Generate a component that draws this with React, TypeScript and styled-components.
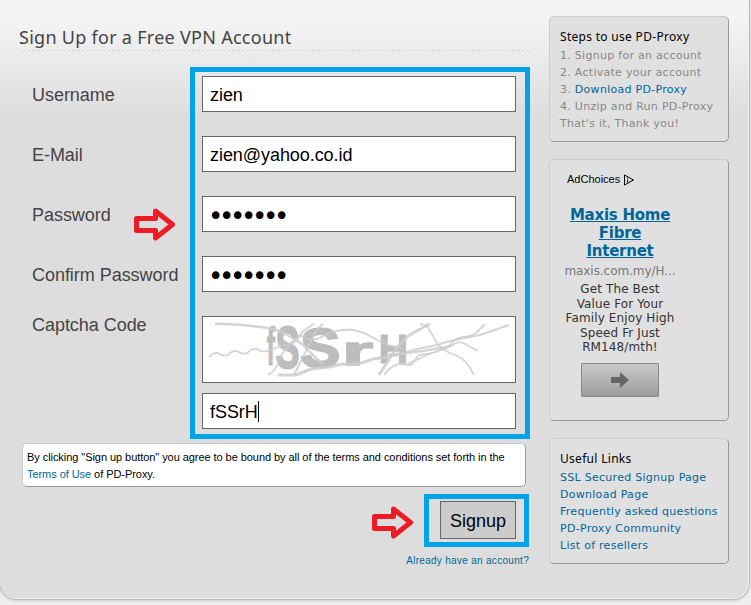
import styled, { createGlobalStyle } from 'styled-components';

const GlobalStyle = createGlobalStyle`
  * {
    box-sizing: border-box;
  }
  html, body, #root {
    height: 100%;
  }
  body {
    margin: 0;
    overflow: hidden;
    background-color: #efefef;
    font-family: 'Liberation Sans', Arial, sans-serif;
    color: #444;
  }
  h1, h2, p, ul, ol {
    margin: 0;
    padding: 0;
    font-weight: 400;
  }
  ul, ol {
    list-style: none;
  }
  a {
    color: #069;
    text-decoration: none;
  }
`;

const Panel = styled.div`
  display: flex;
  align-items: flex-start;
  width: 751px;
  height: 600px;
  margin-left: -1px;
  border: 1px solid #bbb;
  border-top: none;
  border-radius: 0 0 17px 17px;
  background: linear-gradient(#f5f5f5 0, #f4f4f4 18px, #ddd 118px, #ddd 100%);
  box-shadow: inset -1px -1px 0 #f0f0f0, 0 1px 3px #ccc;
`;

const Main = styled.main`
  display: flex;
  flex-direction: column;
  width: 549px;
  padding-top: 26px;
`;

const Title = styled.h1`
  width: 508px;
  height: 25px;
  margin-left: 22px;
  border-bottom: 1px dashed #d6d6d6;
  font-family: 'Noto Sans', sans-serif;
  font-size: 18px;
  line-height: 23px;
  letter-spacing: 0.28px;
  text-indent: -3px;
  white-space: nowrap;
`;

const Form = styled.form`
  display: flex;
  flex-direction: column;
`;

const FormGrid = styled.div`
  position: relative;
  display: grid;
  grid-template-columns: 158px 340px;
  margin: 16px 0 0 32px;
`;

const Labels = styled.div`
  display: flex;
  flex-direction: column;
  gap: 24px;
  padding-top: 9px;
`;

const Label = styled.label<{ $short?: boolean }>`
  height: ${(props) => (props.$short ? 18 : 36)}px;
  font-size: 18px;
  line-height: ${(props) => (props.$short ? 18 : 38)}px;
  letter-spacing: -0.04px;
  white-space: nowrap;
`;

const Fields = styled.div`
  display: flex;
  flex-direction: column;
  gap: 24px;
  height: 372px;
  padding: 4px 9px 5px 7px;
  border: 5px solid #00a2e8;
`;

const Input = styled.input`
  display: block;
  width: 314px;
  height: 36px;
  padding: 3px 7px 0;
  border: 1px solid #666;
  border-radius: 0;
  outline: none;
  background-color: #fff;
  font-family: 'Liberation Sans', Arial, sans-serif;
  font-size: 18px;
  letter-spacing: -0.06px;
  color: #000;
`;

const PasswordInput = styled(Input)`
  padding: 4px 5px 0;
  font-family: 'DejaVu Sans', sans-serif;
  font-size: 26px;
  letter-spacing: -4.34px;
`;

const CaptchaFields = styled.div`
  display: flex;
  flex-direction: column;
  gap: 10px;
`;

const CaptchaBox = styled.div`
  width: 314px;
  height: 67px;
  border: 1px solid #666;
  background-color: #fff;

  svg {
    display: block;
    overflow: visible;
  }
`;

const FocusedField = styled(Input).attrs({ as: 'div' })`
  display: flex;
  align-items: center;
`;

const Caret = styled.span`
  width: 1px;
  height: 21px;
  margin-top: -2px;
  background-color: #000;
`;

const PasswordArrow = styled.span`
  position: absolute;
  left: 102px;
  top: 141px;
`;

const Terms = styled.p`
  width: 504px;
  height: 44px;
  margin: 4px 0 0 22px;
  padding: 5px 4px;
  border: 1px solid #ccc;
  border-right-color: #999;
  border-bottom-color: #999;
  border-radius: 5px;
  background-color: #fff;
  font-size: 11px;
  line-height: 17px;
  letter-spacing: -0.058px;
  color: #000;
  white-space: nowrap;
`;

const Actions = styled.div`
  display: flex;
  align-items: center;
  justify-content: flex-end;
  gap: 10px;
  margin: 7px 20px 0 0;

  > svg {
    margin-top: 3px;
  }
`;

const ButtonFrame = styled.div`
  width: 105px;
  height: 53px;
  padding: 2px 8px 3px 11px;
  border: 5px solid #00a2e8;
`;

const SignupButton = styled.button`
  width: 76px;
  height: 38px;
  padding: 2px 0 0;
  border: 1px solid #666;
  border-radius: 0;
  background-color: #ccc;
  font-family: 'Liberation Sans', Arial, sans-serif;
  font-size: 18px;
  color: #000;
`;

const AccountLink = styled.a`
  align-self: flex-end;
  margin: 7px 20px 0 0;
  font-size: 10px;
  line-height: 14px;
  letter-spacing: 0.3px;
`;

const Sidebar = styled.aside`
  display: flex;
  flex-direction: column;
  gap: 17px;
  width: 180px;
  padding-top: 16px;
`;

const Card = styled.section<{ $height: number }>`
  height: ${(props) => props.$height}px;
  padding: 11px 10px 0;
  border: 1px solid #ccc;
  border-right-color: #999;
  border-bottom-color: #999;
  border-radius: 5px;
  background-color: #e0e0e0;
  font-family: 'DejaVu Sans', Verdana, sans-serif;
  font-size: 11px;
  line-height: 17px;
  letter-spacing: 0.28px;
  color: #888;
  white-space: nowrap;
`;

const CardTitle = styled.h2`
  font-family: 'Noto Sans', sans-serif;
  font-size: 12px;
  line-height: 18px;
  margin-bottom: 1px;
  letter-spacing: 0.3px;
  color: #000;
`;

const AdChoices = styled.div`
  display: flex;
  align-items: center;
  gap: 3px;
  margin-left: 7px;
  font-family: 'Liberation Sans', Arial, sans-serif;
  font-size: 11px;
  letter-spacing: 0;
  color: #000;
`;

const Ad = styled.div`
  display: flex;
  flex-direction: column;
  align-items: center;
  width: 120px;
  margin-top: 18px;
  text-align: center;
`;

const AdTitle = styled.a`
  font-size: 15px;
  font-weight: 700;
  line-height: 18px;
  letter-spacing: -0.25px;
  text-decoration: underline;
`;

const AdUrl = styled.span`
  margin-top: 2px;
  font-size: 12px;
  line-height: 18px;
  letter-spacing: -0.05px;
  color: #777;
`;

const AdText = styled.p`
  margin-top: 2px;
  font-size: 12px;
  line-height: 14.5px;
  letter-spacing: 0.12px;
  color: #333;
`;

const AdButton = styled.button`
  display: flex;
  align-items: center;
  justify-content: center;
  width: 78px;
  height: 34px;
  margin-top: 8px;
  padding: 0;
  border: 1px solid #888;
  border-radius: 1px;
  background: linear-gradient(#c8c8c8, #9c9c9c);
`;

const steps = ['Signup for an account', 'Activate your account', 'Download PD-Proxy', 'Unzip and Run PD-Proxy'];

const usefulLinks = [
  'SSL Secured Signup Page',
  'Download Page',
  'Frequently asked questions',
  'PD-Proxy Community',
  'List of resellers',
];

const adTitle = ['Maxis Home', 'Fibre', 'Internet'];
const adText = ['Get The Best', 'Value For Your', 'Family Enjoy High', 'Speed Fr Just', 'RM148/mth!'];

function Lines({ items }: { items: string[] }) {
  return (
    <>
      {items.map((item, index) => (
        <span key={item}>
          {index > 0 && <br />}
          {item}
        </span>
      ))}
    </>
  );
}

function RedArrow() {
  return (
    <svg width='42' height='33' viewBox='0 0 42 33' fill='none' display='block'>
      <path
        d='M2.5 10.5H21.5V3L38.5 16.5L21.5 30V22.5H2.5Z'
        stroke='#ed1c24'
        strokeWidth='5'
        strokeLinejoin='round'
      />
    </svg>
  );
}

function Captcha() {
  return (
    <svg width='312' height='65' viewBox='0 0 312 65'>
      <g
        fill='#bdbdbd'
        stroke='#bdbdbd'
        fontFamily="'Liberation Sans', Arial, sans-serif"
        fontWeight='700'
      >
        <text transform='translate(63.5 48) scale(.48 1)' fontSize='53'>f</text>
        <text transform='translate(72.5 50.5) scale(.61 1)' fontSize='59' strokeWidth='1.8'>S</text>
        <text transform='translate(97 50) scale(1.1 1)' fontSize='55' strokeWidth='1.8'>S</text>
        <text transform='translate(139 48) scale(2 1)' fontSize='40' strokeWidth='1.4'>r</text>
        <text transform='translate(175.5 45.5) scale(1 1)' fontSize='41'>H</text>
      </g>
      <g fill='none' stroke='#ccc' strokeOpacity='.85' strokeWidth='1.8' strokeLinejoin='round'>
        <path d='M12 6.5L40 8L69 11.5Q88 18 100 28L120 48' strokeWidth='2.5' />
        <path d='M6 40Q11 35 15 36Q20 40 25 38Q30 33 34 34Q39 38 44 36Q49 31 54 32Q60 36 64 34L78 29Q88 28 97 18Q106 25 117 21Q128 13 147 12.5Q160 14 174 23Q187 30 200 31' />
        <path d='M75 58H93L108 52L126 50L139 47Q151 48 160 45.5L170 42L184 40L197 37' strokeWidth='3' />
        <path d='M197 37L214 32L234 28L247 24L277 18L306 8' strokeWidth='2' />
        <path d='M65 58Q73 54 76 43Q82 30 90 26Q96 22 99 15L111 6.5' />
        <path d='M91 58L104 32L111 17Q114 12 120 6.5' />
        <path d='M176 58L190 36Q202 20 210 16L227 6.5' strokeWidth='3' />
        <path d='M181 58Q188 48 197 47L208 48L216 38Q231 37 245 30Q253 19 262 20L272 17L282 7' />
        <path d='M217 6.5L224 9L233 24Q236 31 247 36Q260 40 266 49L271 58' />
        <path d='M205 47L224 38L248 29Q254 24 260 26L275 34' />
        <path d='M185 38L202 36L220 34L248 29' strokeWidth='2.5' />
      </g>
    </svg>
  );
}

function App() {
  return (
    <>
      <GlobalStyle />
      <Panel>
        <Main>
          <Title>Sign Up for a Free VPN Account</Title>
          <Form>
            <FormGrid>
              <Labels>
                <Label htmlFor='username'>Username</Label>
                <Label htmlFor='email'>E-Mail</Label>
                <Label htmlFor='password'>Password</Label>
                <Label htmlFor='confirm'>Confirm Password</Label>
                <Label $short>Captcha Code</Label>
              </Labels>
              <Fields>
                <Input id='username' defaultValue='zien' />
                <Input id='email' defaultValue='zien@yahoo.co.id' />
                <PasswordInput id='password' type='password' defaultValue='zien123' />
                <PasswordInput id='confirm' type='password' defaultValue='zien123' />
                <CaptchaFields>
                  <CaptchaBox>
                    <Captcha />
                  </CaptchaBox>
                  <FocusedField>
                    fSSrH
                    <Caret />
                  </FocusedField>
                </CaptchaFields>
              </Fields>
              <PasswordArrow>
                <RedArrow />
              </PasswordArrow>
            </FormGrid>
            <Terms>
              By clicking "Sign up button" you agree to be bound by all of the terms and conditions set forth in the
              <br />
              <a href='#terms'>Terms of Use</a> of PD-Proxy.
            </Terms>
            <Actions>
              <RedArrow />
              <ButtonFrame>
                <SignupButton type='button'>Signup</SignupButton>
              </ButtonFrame>
            </Actions>
            <AccountLink href='#login'>Already have an account?</AccountLink>
          </Form>
        </Main>
        <Sidebar>
          <Card $height={126}>
            <CardTitle>Steps to use PD-Proxy</CardTitle>
            <ol>
              {steps.map((step, index) => (
                <li key={step}>
                  {index + 1}. {index === 2 ? <a href='#download'>{step}</a> : step}
                </li>
              ))}
            </ol>
            <p>That's it, Thank you!</p>
          </Card>
          <Card $height={262}>
            <AdChoices>
              AdChoices
              <svg width='12' height='12' viewBox='0 0 12 12' fill='none' stroke='#000'>
                <path d='M1.5 1L10.5 6L1.5 11Z' />
                <path d='M4.5 3.5V4.5M4.5 5.5V8.5' />
              </svg>
            </AdChoices>
            <Ad>
              <AdTitle href='#ad'>
                <Lines items={adTitle} />
              </AdTitle>
              <AdUrl>maxis.com.my/H...</AdUrl>
              <AdText>
                <Lines items={adText} />
              </AdText>
              <AdButton type='button'>
                <svg width='18' height='16' viewBox='0 0 18 16'>
                  <path d='M0 5H9V0L18 8L9 16V11H0Z' fill='#666' />
                </svg>
              </AdButton>
            </Ad>
          </Card>
          <Card $height={126}>
            <CardTitle>Useful Links</CardTitle>
            <ul>
              {usefulLinks.map((link) => (
                <li key={link}>
                  <a href='#links'>{link}</a>
                </li>
              ))}
            </ul>
          </Card>
        </Sidebar>
      </Panel>
    </>
  );
}

export default App;
